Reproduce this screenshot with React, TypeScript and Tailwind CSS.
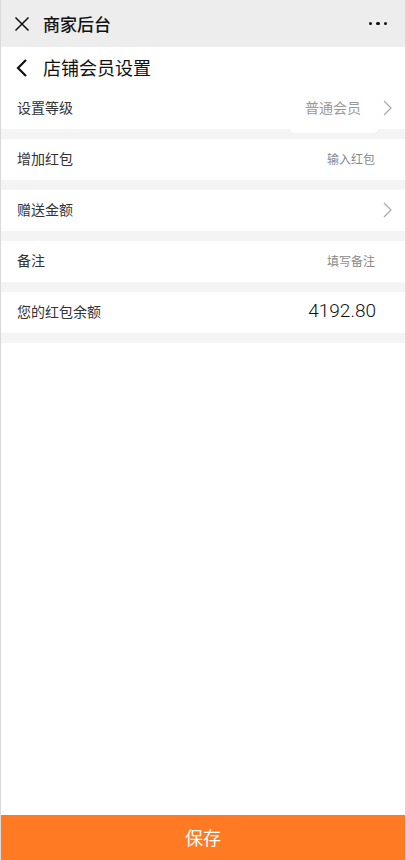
const font = { fontFamily: '"Noto Sans CJK SC", "Noto Sans", sans-serif' };

function Chevron() {
  return (
    <svg width="9" height="16" viewBox="0 0 9 16" stroke="#a8a8a8" strokeWidth="1.2" fill="none" className="-mr-[1px]">
      <path d="M1 1l7 7-7 7" />
    </svg>
  );
}

function Row({ label, children }: { label: string; children?: React.ReactNode }) {
  return (
    <div className="flex h-[41px] items-center justify-between bg-white pb-[2px] pl-4 pr-[14px]">
      <span className="text-[14px] text-[#333]">{label}</span>
      {children}
    </div>
  );
}

function Gap({ children }: { children?: React.ReactNode }) {
  return <div className="relative h-[10px] bg-[#f4f4f4]">{children}</div>;
}

export default function App() {
  return (
    <div className="flex h-[860px] flex-col border-x border-[#d9d9d9] bg-white" style={font}>
      {/* top bar */}
      <div className="flex h-[47px] items-center justify-between bg-[#ededed] pl-[12px] pr-[18px]">
        <div className="flex items-center gap-[12px]">
          <svg width="18" height="18" viewBox="0 0 18 18" stroke="#111" strokeWidth="1.5" fill="none">
            <path d="M2.5 2.5 15.5 15.5M15.5 2.5 2.5 15.5" />
          </svg>
          <span className="text-[17px] font-medium text-[#111]">商家后台</span>
        </div>
        <div className="flex gap-[4px]">
          <span className="h-[3.5px] w-[3.5px] rounded-full bg-[#111]" />
          <span className="h-[3.5px] w-[3.5px] rounded-full bg-[#111]" />
          <span className="h-[3.5px] w-[3.5px] rounded-full bg-[#111]" />
        </div>
      </div>

      {/* title */}
      <div className="flex h-[41px] items-center gap-[14px] pl-[14px]">
        <svg width="14" height="20" viewBox="0 0 14 20" stroke="#111" strokeWidth="2.2" fill="none">
          <path d="M11 2 3 10l8 8" />
        </svg>
        <span className="text-[18px] text-[#111]">店铺会员设置</span>
      </div>

      <Row label="设置等级">
        <div className="flex items-center">
          <span className="text-[14px] text-[#999]">普通会员</span>
          <span className="ml-[22px]">
            <Chevron />
          </span>
        </div>
      </Row>
      <Gap>
        <div className="absolute right-[28px] top-0 h-[4px] w-[86px] rounded-b-sm bg-white" />
      </Gap>
      <Row label="增加红包">
        <span className="pr-[16px] text-[12px] text-[#888]">输入红包</span>
      </Row>
      <Gap />
      <Row label="赠送金额">
        <Chevron />
      </Row>
      <Gap />
      <Row label="备注">
        <span className="pr-[16px] text-[12px] text-[#888]">填写备注</span>
      </Row>
      <Gap />
      <Row label="您的红包余额">
        <span
          className="pr-[15px] text-[19px] font-light text-[#111]"
          style={{ fontFamily: 'Roboto, "Noto Sans", sans-serif' }}
        >
          4192.80
        </span>
      </Row>
      <Gap />

      <div className="flex-1" />

      <button className="flex h-[45px] w-full items-center justify-center bg-[#ff7a22] text-[18px] text-white">
        保存
      </button>
    </div>
  );
}
